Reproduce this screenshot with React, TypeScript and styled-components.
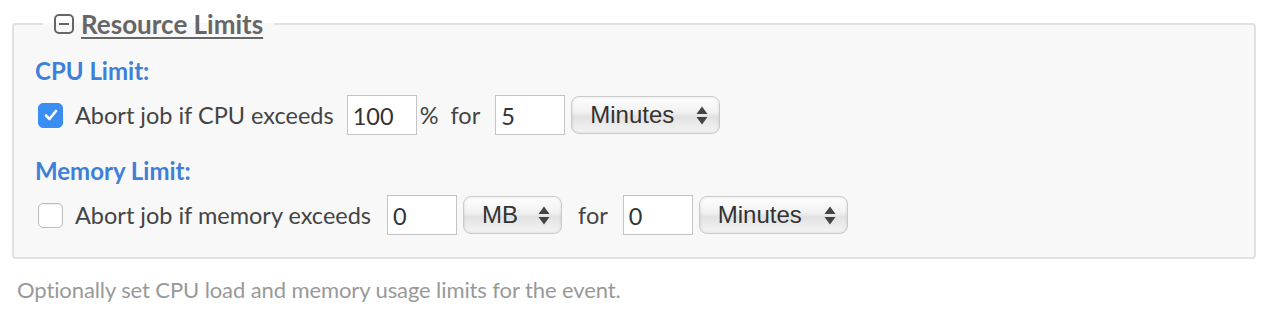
import React from "react"
import styled, { createGlobalStyle } from "styled-components"

const GlobalStyle = createGlobalStyle`
  body {
    margin: 0;
    background: #fff;
    font-family: Lato, "Open Sans", sans-serif;
  }
`

const Page = styled.div`
  padding: 8px 12px 0 12px;
  width: 1244px;
`

const FieldSet = styled.fieldset`
  margin: 0;
  padding: 17px 21px 22px 21px;
  border: 2px solid #e1e1e1;
  border-radius: 4px;
  background: #f8f8f8;
  min-width: 0;
`

const Legend = styled.legend`
  margin-left: 8px;
  padding: 0 11px;
  height: 32px;
  display: flex;
  align-items: center;
  gap: 7px;
  font-size: 26px;
  font-weight: bold;
  color: #666;
`

const LegendText = styled.span`
  text-decoration: underline;
  text-underline-offset: 3px;
  text-decoration-thickness: 2px;
`

const Section = styled.div`
  & + & {
    margin-top: 22px;
  }
`

const SectionTitle = styled.div`
  font-size: 24px;
  font-weight: bold;
  color: #3f7fd8;
  line-height: 28px;
  margin-bottom: 10px;
`

const Row = styled.div`
  display: flex;
  align-items: center;
  height: 40px;
  font-size: 23.5px;
  color: #444;
`

const Check = styled.span<{ checked?: boolean }>`
  width: 25px;
  height: 25px;
  box-sizing: border-box;
  margin: 0 12px 0 3px;
  border-radius: 5px;
  display: flex;
  align-items: center;
  justify-content: center;
  background: ${(p) => (p.checked ? "#3a8df3" : "#fff")};
  border: 1px solid ${(p) => (p.checked ? "#3a8df3" : "#bdbdbd")};
  box-shadow: ${(p) => (p.checked ? "none" : "inset 0 1px 2px rgba(0,0,0,0.08)")};
`

const Text = styled.span<{ gap?: number; lead?: number }>`
  margin-left: ${(p) => p.lead ?? 0}px;
  margin-right: ${(p) => p.gap ?? 0}px;
  white-space: nowrap;
`

const TextInput = styled.input`
  box-sizing: border-box;
  width: 70px;
  height: 40px;
  margin: 0 3px 0 0;
  padding: 2px 5px 0;
  border: 1px solid #c4c4c4;
  background: #fff;
  font-family: Lato, sans-serif;
  font-size: 23.5px;
  color: #333;
  outline: none;
`

const SelectBox = styled.div<{ w: number }>`
  box-sizing: border-box;
  width: ${(p) => p.w}px;
  height: 38px;
  margin-left: 3px;
  padding: 0 11px 0 18px;
  display: flex;
  align-items: center;
  justify-content: space-between;
  border: 1px solid #cacaca;
  border-radius: 8px;
  background: linear-gradient(to bottom, #fefefe 0%, #f2f2f2 42%, #e2e2e2 55%, #f4f4f4 100%);
  box-shadow: inset 0 0 3px rgba(0, 0, 0, 0.12);
  font-family: "Liberation Sans", Arial, sans-serif;
  font-size: 24px;
  color: #333;
`

const Caption = styled.div`
  margin: 18px 0 0 5px;
  font-size: 22px;
  line-height: 26px;
  color: #999;
  letter-spacing: -0.1px;
`

const CollapseIcon = () => (
  <svg width="20" height="20" viewBox="0 0 20 20">
    <rect x="1" y="1" width="18" height="18" rx="4" fill="none" stroke="#666" strokeWidth="2" />
    <line x1="5" y1="10" x2="15" y2="10" stroke="#666" strokeWidth="2" />
  </svg>
)

const Arrows = () => (
  <svg width="12" height="19" viewBox="0 0 12 19">
    <path d="M6 0.5 L11.5 8 L0.5 8 Z" fill="#444" />
    <path d="M0.5 11 L11.5 11 L6 18.5 Z" fill="#444" />
  </svg>
)

const Tick = () => (
  <svg width="16" height="16" viewBox="0 0 16 16">
    <path d="M3 8.5 L6.5 12 L13 4" fill="none" stroke="#fff" strokeWidth="2.6" strokeLinecap="round" strokeLinejoin="round" />
  </svg>
)

const Select: React.FC<{ label: string; w: number }> = ({ label, w }) => (
  <SelectBox w={w}>
    <span>{label}</span>
    <Arrows />
  </SelectBox>
)

export default function App() {
  return (
    <Page>
      <GlobalStyle />
      <FieldSet>
        <Legend>
          <CollapseIcon />
          <LegendText>Resource Limits</LegendText>
        </Legend>
        <Section>
          <SectionTitle>CPU Limit:</SectionTitle>
          <Row>
            <Check checked>
              <Tick />
            </Check>
            <Text gap={13}>Abort job if CPU exceeds</Text>
            <TextInput defaultValue="100" />
            <Text gap={15}>%&nbsp;&nbsp;for</Text>
            <TextInput defaultValue="5" />
            <Select label="Minutes" w={149} />
          </Row>
        </Section>
        <Section>
          <SectionTitle>Memory Limit:</SectionTitle>
          <Row>
            <Check />
            <Text gap={16}>Abort job if memory exceeds</Text>
            <TextInput defaultValue="0" />
            <Select label="MB" w={99} />
            <Text gap={15} lead={16}>for</Text>
            <TextInput defaultValue="0" />
            <Select label="Minutes" w={149} />
          </Row>
        </Section>
      </FieldSet>
      <Caption>Optionally set CPU load and memory usage limits for the event.</Caption>
    </Page>
  )
}
